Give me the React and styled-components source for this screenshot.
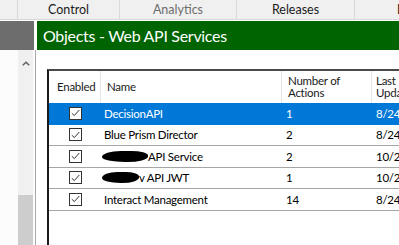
import React from 'react';
import styled, { createGlobalStyle } from 'styled-components';

const Global = createGlobalStyle`
  html, body {
    margin: 0;
    padding: 0;
    background: #fff;
    overflow: hidden;
  }
  body {
    font-family: Lato, "Noto Sans", sans-serif;
    color: #000;
  }
`;

const Window = styled.div`
  width: 399px;
  height: 245px;
  display: flex;
  flex-direction: column;
  overflow: hidden;
`;

const TabBar = styled.div`
  height: 19px;
  display: flex;
  background: #f0f0f0;
  border-bottom: 1px solid #d9d9d9;
  margin-bottom: 1px;
  flex-shrink: 0;
`;

const Tab = styled.div`
  width: ${(p) => p.$w}px;
  flex-shrink: 0;
  display: flex;
  align-items: center;
  justify-content: ${(p) => (p.$left ? 'flex-start' : 'center')};
  padding-left: ${(p) => (p.$left ? 42 : 0)}px;
  box-sizing: border-box;
  border-left: ${(p) => (p.$first ? 'none' : '1px solid #d9d9d9')};
  font-size: 12.5px;
  color: ${(p) => (p.$muted ? '#6d6d6d' : '#1a1a1a')};
`;

const Body = styled.div`
  flex: 1;
  display: flex;
  min-height: 0;
`;

const LeftPane = styled.div`
  width: 34px;
  flex-shrink: 0;
  display: flex;
  flex-direction: column;
`;

const PaneCaption = styled.div`
  height: 29px;
  background: #6d6d6d;
  flex-shrink: 0;
`;

const PaneBody = styled.div`
  flex: 1;
  display: flex;
  justify-content: flex-end;
  background: #fcfcfc;
`;

const ScrollBar = styled.div`
  width: 15px;
  margin-right: 1px;
  display: flex;
  flex-direction: column;
  background: #f0f0f0;
`;

const ScrollArrow = styled.div`
  height: 22px;
  display: flex;
  align-items: center;
  justify-content: center;
  padding-top: 4px;
  box-sizing: border-box;
`;

const ScrollTrack = styled.div`
  flex: 1;
  display: flex;
  flex-direction: column;
  justify-content: flex-end;
`;

const ScrollThumb = styled.div`
  height: 50px;
  background: #cdcdcd;
`;

const Splitter = styled.div`
  width: 3px;
  flex-shrink: 0;
  display: flex;
  flex-direction: column;
  &::before {
    content: '';
    height: 29px;
  }
  &::after {
    content: '';
    flex: 1;
    margin-left: 1px;
    width: 1px;
    background: #a8a8a8;
  }
`;

const MainPane = styled.div`
  flex: 1;
  display: flex;
  flex-direction: column;
  min-width: 0;
`;

const Caption = styled.div`
  height: 29px;
  flex-shrink: 0;
  background: #006400;
  color: #fff;
  font-size: 16px;
  letter-spacing: -0.3px;
  display: flex;
  align-items: center;
  padding-left: 6px;
  white-space: nowrap;
`;

const Content = styled.div`
  flex: 1;
  padding: 19px 0 0 10px;
  overflow: hidden;
`;

const Table = styled.div`
  height: 100%;
  border-top: 2px solid #4a4a4a;
  border-left: 2px solid #1a1a1a;
  box-sizing: border-box;
  font-size: 11.5px;
  letter-spacing: -0.25px;
`;

const HeaderRow = styled.div`
  height: 32px;
  display: flex;
  color: #1a1a1a;
`;

const HeadCell = styled.div`
  width: ${(p) => p.$w}px;
  flex-shrink: 0;
  box-sizing: border-box;
  display: flex;
  flex-direction: column;
  justify-content: center;
  padding-left: ${(p) => p.$pad}px;
  border-right: 1px solid #e5e5e5;
  line-height: 12px;
  white-space: nowrap;
  overflow: hidden;
`;

const Row = styled.div`
  height: 21.5px;
  box-sizing: border-box;
  display: flex;
  align-items: center;
  background: ${(p) => (p.$selected ? '#0078d7' : '#fff')};
  color: ${(p) => (p.$selected ? '#fff' : '#000')};
  border-bottom: 1px solid ${(p) => (p.$selected ? '#0078d7' : '#a6a6a6')};
`;

const Cell = styled.div`
  width: ${(p) => p.$w}px;
  flex-shrink: 0;
  box-sizing: border-box;
  padding-left: ${(p) => p.$pad}px;
  display: flex;
  align-items: center;
  justify-content: ${(p) => (p.$center ? 'center' : 'flex-start')};
  white-space: nowrap;
  overflow: hidden;
`;

const CheckBox = styled.span`
  width: 13px;
  height: 13px;
  box-sizing: border-box;
  border: 1px solid #333;
  background: #fff;
  display: flex;
  align-items: center;
  justify-content: center;
`;

const Redacted = styled.span`
  display: inline-block;
  width: ${(p) => p.$w}px;
  height: 11px;
  background: #000;
  border-radius: 45% 40% 50% 55% / 60% 45% 55% 50%;
  margin-left: -2px;
  margin-right: 0;
`;

const cols = [52, 181, 90, 120];

const rows = [
  { hidden: 0, name: 'DecisionAPI', actions: '1', date: '8/24/2022', selected: true },
  { hidden: 0, name: 'Blue Prism Director', actions: '2', date: '8/24/2022' },
  { hidden: 46, name: 'API Service', actions: '2', date: '10/23/2022' },
  { hidden: 37, name: 'v API JWT', actions: '1', date: '10/23/2022' },
  { hidden: 0, name: 'Interact Management', actions: '14', date: '8/24/2022' },
];

function Check() {
  return (
    <CheckBox>
      <svg width="9" height="8" viewBox="0 0 9 8">
        <path d="M0.8 4.2 L3.3 6.6 L8.3 1" fill="none" stroke="#333" strokeWidth="1" />
      </svg>
    </CheckBox>
  );
}

function UpArrow() {
  return (
    <svg width="8" height="5" viewBox="0 0 8 5">
      <path d="M0.8 4.3 L4 1.2 L7.2 4.3" fill="none" stroke="#606060" strokeWidth="1.5" />
    </svg>
  );
}

export default function App() {
  return (
    <Window>
      <Global />
      <TabBar>
        <Tab $w={17} $first />
        <Tab $w={102}>Control</Tab>
        <Tab $w={117} $muted>Analytics</Tab>
        <Tab $w={118}>Releases</Tab>
        <Tab $w={60} $left>D</Tab>
      </TabBar>
      <Body>
        <LeftPane>
          <PaneCaption />
          <PaneBody>
            <ScrollBar>
              <ScrollArrow>
                <UpArrow />
              </ScrollArrow>
              <ScrollTrack>
                <ScrollThumb />
              </ScrollTrack>
            </ScrollBar>
          </PaneBody>
        </LeftPane>
        <Splitter />
        <MainPane>
          <Caption>Objects - Web API Services</Caption>
          <Content>
            <Table>
              <HeaderRow>
                <HeadCell $w={cols[0]} $pad={8}>Enabled</HeadCell>
                <HeadCell $w={cols[1]} $pad={6}>Name</HeadCell>
                <HeadCell $w={cols[2]} $pad={6}>
                  <span>Number of</span>
                  <span>Actions</span>
                </HeadCell>
                <HeadCell $w={cols[3]} $pad={4}>
                  <span>Last</span>
                  <span>Updated</span>
                </HeadCell>
              </HeaderRow>
              {rows.map((r) => (
                <Row key={r.name} $selected={r.selected}>
                  <Cell $w={cols[0]} $center>
                    <Check />
                  </Cell>
                  <Cell $w={cols[1]} $pad={3}>
                    {r.hidden > 0 && <Redacted $w={r.hidden} />}
                    {r.name}
                  </Cell>
                  <Cell $w={cols[2]} $pad={4}>{r.actions}</Cell>
                  <Cell $w={cols[3]} $pad={4}>{r.date}</Cell>
                </Row>
              ))}
            </Table>
          </Content>
        </MainPane>
      </Body>
    </Window>
  );
}
